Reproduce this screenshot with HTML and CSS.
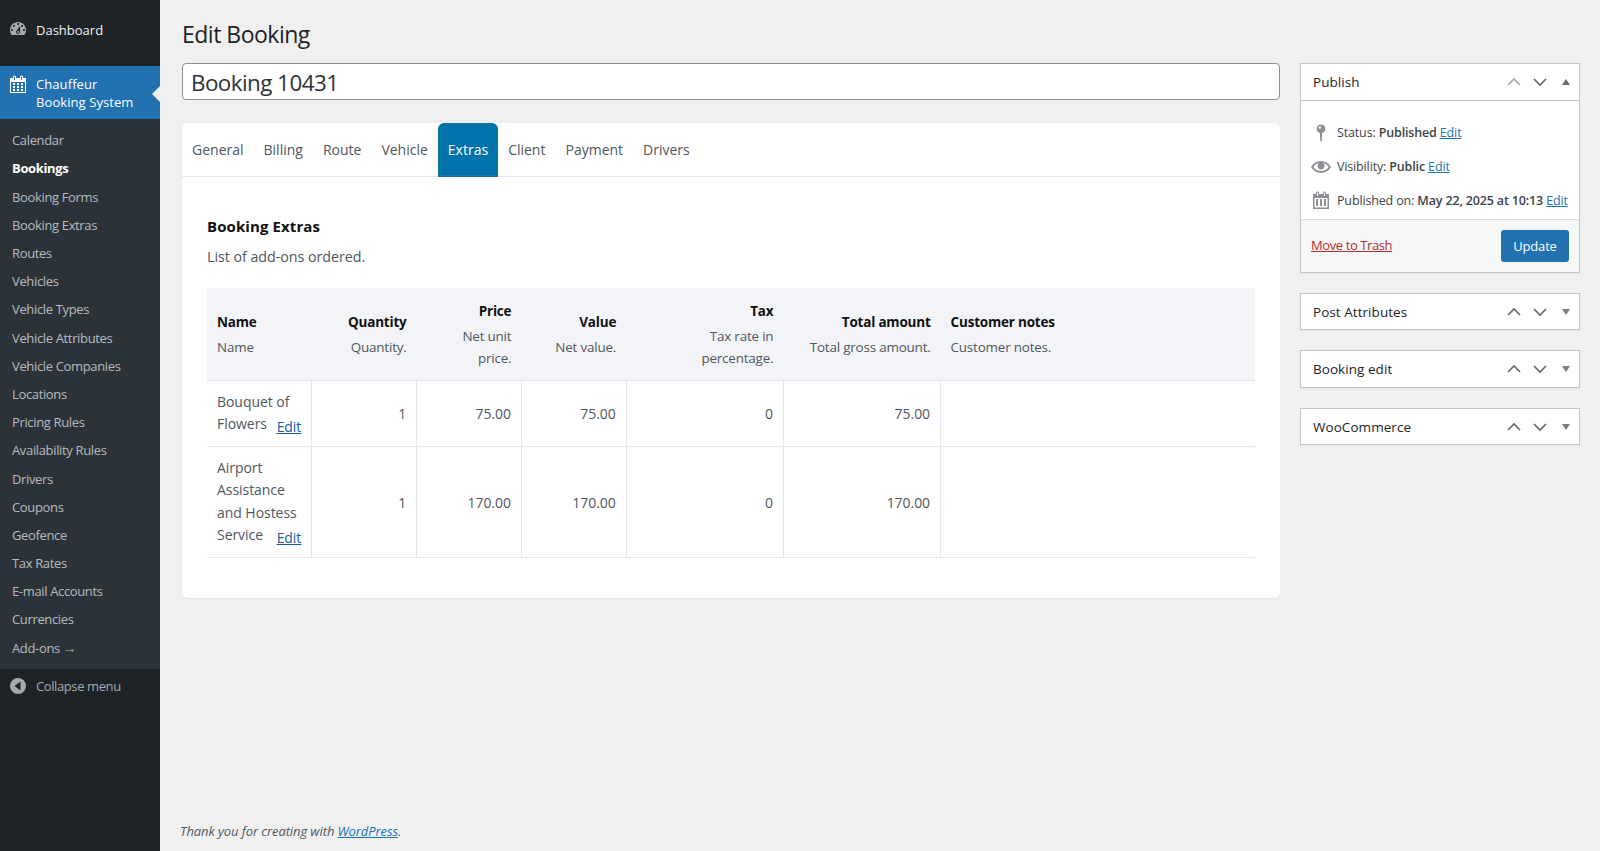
FILE: index.html
```html
<!DOCTYPE html>
<html lang="en">
<head>
<meta charset="utf-8">
<title>Edit Booking</title>
<link rel="stylesheet" href="styles.css">
</head>
<body>
<div class="layout">
  <aside class="sidebar">
    <a class="top-item dash">
      <svg class="menu-icon" viewBox="0 0 20 20"><path fill-rule="evenodd" d="M3.76 16h12.48c1.1-1.37 1.76-3.11 1.76-5 0-4.42-3.58-8-8-8s-8 3.58-8 8c0 1.89.66 3.63 1.76 5zM10 4c.55 0 1 .45 1 1s-.45 1-1 1-1-.45-1-1 .45-1 1-1zM6 6c.55 0 1 .45 1 1s-.45 1-1 1-1-.45-1-1 .45-1 1-1zm8 0c.55 0 1 .45 1 1s-.45 1-1 1-1-.45-1-1 .45-1 1-1zm-5.37 5.55L12 7v6c0 1.1-.9 2-2 2s-2-.9-2-2c0-.57.24-1.08.63-1.45zM4 10c.55 0 1 .45 1 1s-.45 1-1 1-1-.45-1-1 .45-1 1-1zm12 0c.55 0 1 .45 1 1s-.45 1-1 1-1-.45-1-1 .45-1 1-1zm-5 3c0-.55-.45-1-1-1s-1 .45-1 1 .45 1 1 1 1-.45 1-1z"/></svg>
      <span>Dashboard</span>
    </a>
    <a class="top-item current">
      <svg class="menu-icon" viewBox="0 0 20 20"><path d="M15 4h3v15H2V4h3V3c0-.41.15-.76.44-1.06.29-.29.65-.44 1.06-.44s.77.15 1.06.44c.29.3.44.65.44 1.06v1h4V3c0-.41.15-.76.44-1.06.29-.29.65-.44 1.06-.44s.77.15 1.06.44c.29.3.44.65.44 1.06v1zM6 3v2.500c0 .14.05.26.15.36.09.09.21.14.35.14s.26-.05.35-.14c.1-.1.15-.22.15-.36V3c0-.14-.05-.26-.15-.35-.09-.1-.21-.15-.35-.15s-.26.05-.35.15c-.1.09-.15.21-.15.35zm7 0v2.500c0 .14.05.26.14.36.1.09.22.14.36.14s.26-.05.36-.14c.09-.1.14-.22.14-.36V3c0-.14-.05-.26-.14-.35-.1-.1-.22-.15-.36-.15s-.26.05-.36.15c-.09.09-.14.21-.14.35zm4 15V8H3v10h14zM7 9v2H5V9h2zm2 0h2v2H9V9zm4 2V9h2v2h-2zm-6 1v2H5v-2h2zm2 0h2v2H9v-2zm4 2v-2h2v2h-2zm-6 1v2H5v-2h2zm4 2H9v-2h2v2zm4 0h-2v-2h2v2z"/></svg>
      <span>Chauffeur<br>Booking System</span>
    </a>
    <ul class="submenu">
      <li>Calendar</li>
      <li class="on">Bookings</li>
      <li>Booking Forms</li>
      <li>Booking Extras</li>
      <li>Routes</li>
      <li>Vehicles</li>
      <li>Vehicle Types</li>
      <li>Vehicle Attributes</li>
      <li>Vehicle Companies</li>
      <li>Locations</li>
      <li>Pricing Rules</li>
      <li>Availability Rules</li>
      <li>Drivers</li>
      <li>Coupons</li>
      <li>Geofence</li>
      <li>Tax Rates</li>
      <li>E-mail Accounts</li>
      <li>Currencies</li>
      <li>Add-ons →</li>
    </ul>
    <a class="collapse">
      <svg class="menu-icon" viewBox="0 0 20 20"><path fill-rule="evenodd" d="M10 2a8 8 0 1 0 0 16 8 8 0 0 0 0-16zM12.500 5.500v9L6.500 10z"/></svg>
      <span>Collapse menu</span>
    </a>
  </aside>

  <div class="page">
    <main class="content">
      <h1 class="page-title">Edit Booking</h1>
      <div class="columns">
        <div class="col-main">
          <div class="title-input">Booking 10431</div>
          <section class="card">
            <nav class="tabs">
              <a class="tab">General</a>
              <a class="tab">Billing</a>
              <a class="tab">Route</a>
              <a class="tab">Vehicle</a>
              <a class="tab active">Extras</a>
              <a class="tab">Client</a>
              <a class="tab">Payment</a>
              <a class="tab">Drivers</a>
            </nav>
            <div class="panel">
              <h2 class="panel-title">Booking Extras</h2>
              <p class="panel-sub">List of add-ons ordered.</p>
              <table class="extras">
                <colgroup>
                  <col class="w10"><col class="w10"><col class="w10"><col class="w10"><col class="w15"><col class="w15"><col class="w30">
                </colgroup>
                <thead>
                  <tr>
                    <th><b>Name</b><small>Name</small></th>
                    <th class="r"><b>Quantity</b><small>Quantity.</small></th>
                    <th class="r"><b>Price</b><small>Net unit<br>price.</small></th>
                    <th class="r"><b>Value</b><small>Net value.</small></th>
                    <th class="r"><b>Tax</b><small>Tax rate in<br>percentage.</small></th>
                    <th class="r"><b>Total amount</b><small>Total gross amount.</small></th>
                    <th><b>Customer notes</b><small>Customer notes.</small></th>
                  </tr>
                </thead>
                <tbody>
                  <tr>
                    <td>Bouquet of Flowers <a class="cell-edit">Edit</a></td>
                    <td class="r">1</td><td class="r">75.00</td><td class="r">75.00</td><td class="r">0</td><td class="r">75.00</td><td></td>
                  </tr>
                  <tr>
                    <td>Airport Assistance and Hostess Service <a class="cell-edit">Edit</a></td>
                    <td class="r">1</td><td class="r">170.00</td><td class="r">170.00</td><td class="r">0</td><td class="r">170.00</td><td></td>
                  </tr>
                </tbody>
              </table>
            </div>
          </section>
        </div>

        <aside class="col-side">
          <section class="box">
            <header class="box-head">
              <span class="box-title">Publish</span>
              <svg class="ctl dim" viewBox="0 0 16 10"><path d="M2 8l6-6 6 6"/></svg>
              <svg class="ctl" viewBox="0 0 16 10"><path d="M2 2l6 6 6-6"/></svg>
              <svg class="tri up" viewBox="0 0 10 8"><path d="M5 1l4 6H1z"/></svg>
            </header>
            <div class="pub-body">
              <div class="pub-row">
                <svg class="pub-icon" viewBox="0 0 20 20"><path fill-rule="evenodd" d="M10 1.500a4.300 4.300 0 0 0-1.100 8.450L9.300 18.500h1.400l.4-8.550A4.300 4.300 0 0 0 10 1.500zM8.900 3.400a1.200 1.200 0 1 1 0 2.400 1.200 1.200 0 0 1 0-2.400z"/></svg>
                <span>Status: <b>Published</b> <a>Edit</a></span>
              </div>
              <div class="pub-row">
                <svg class="pub-icon" viewBox="0 0 20 20"><path d="M19.700 9.400C17.700 6 14 3.900 10 3.900S2.300 6 .3 9.400L0 10l.3.6c2 3.400 5.700 5.500 9.700 5.500s7.700-2.100 9.700-5.500l.3-.6-.3-.6zM10 14.100c-3.100 0-6-1.600-7.700-4.100C3.600 8 5.700 6.600 8 6.100c-.9.6-1.500 1.700-1.500 2.900 0 1.900 1.600 3.500 3.500 3.500s3.500-1.600 3.500-3.500c0-1.200-.6-2.300-1.500-2.900 2.300.5 4.400 1.900 5.700 3.900-1.700 2.500-4.600 4.100-7.700 4.100z"/></svg>
                <span>Visibility: <b>Public</b> <a>Edit</a></span>
              </div>
              <div class="pub-row">
                <svg class="pub-icon" viewBox="0 0 20 20"><path fill-rule="evenodd" d="M15 4h3v15H2V4h3V3c0-.8.7-1.500 1.500-1.500S8 2.200 8 3v1h4V3c0-.8.7-1.500 1.500-1.500S15 2.200 15 3zM6 3v2.500a.5.5 0 0 0 1 0V3a.5.5 0 0 0-1 0zm7 0v2.500a.5.5 0 0 0 1 0V3a.5.5 0 0 0-1 0zM3.500 8v9.500h13V8zM5 9h2v7H5zm4 0h2v7H9zm4 0h2v7h-2z"/></svg>
                <span>Published on: <b>May 22, 2025 at 10:13</b> <a>Edit</a></span>
              </div>
            </div>
            <footer class="pub-foot">
              <a class="trash">Move to Trash</a>
              <button class="update" type="button">Update</button>
            </footer>
          </section>

          <section class="box closed">
            <header class="box-head">
              <span class="box-title">Post Attributes</span>
              <svg class="ctl" viewBox="0 0 16 10"><path d="M2 8l6-6 6 6"/></svg>
              <svg class="ctl" viewBox="0 0 16 10"><path d="M2 2l6 6 6-6"/></svg>
              <svg class="tri" viewBox="0 0 10 8"><path d="M5 7l4-6H1z"/></svg>
            </header>
          </section>
          <section class="box closed tall">
            <header class="box-head">
              <span class="box-title">Booking edit</span>
              <svg class="ctl" viewBox="0 0 16 10"><path d="M2 8l6-6 6 6"/></svg>
              <svg class="ctl" viewBox="0 0 16 10"><path d="M2 2l6 6 6-6"/></svg>
              <svg class="tri" viewBox="0 0 10 8"><path d="M5 7l4-6H1z"/></svg>
            </header>
          </section>
          <section class="box closed">
            <header class="box-head">
              <span class="box-title">WooCommerce</span>
              <svg class="ctl" viewBox="0 0 16 10"><path d="M2 8l6-6 6 6"/></svg>
              <svg class="ctl" viewBox="0 0 16 10"><path d="M2 2l6 6 6-6"/></svg>
              <svg class="tri" viewBox="0 0 10 8"><path d="M5 7l4-6H1z"/></svg>
            </header>
          </section>
        </aside>
      </div>
    </main>
    <footer class="page-foot"><em>Thank you for creating with <a>WordPress</a>.</em></footer>
  </div>
</div>
</body>
</html>
```

FILE: styles.css
```css
* { box-sizing: border-box; }
html, body { height: 100%; }
body {
  margin: 0;
  background: #f0f0f1;
  color: #3c434a;
  font-family: "Open Sans", "Noto Sans", sans-serif;
  font-size: 13px;
  overflow: hidden;
}
a { color: #2271b1; text-decoration: underline; }
.layout { display: flex; height: 851px; }

/* Sidebar */
.sidebar {
  width: 160px;
  flex: none;
  background: #1d2327;
  color: #f0f0f1;
}
.top-item {
  display: flex;
  color: #f0f0f1;
  text-decoration: none;
  padding-left: 8px;
  gap: 8px;
  letter-spacing: 0;
}
.menu-icon { width: 20px; height: 20px; fill: #a7aaad; flex: none; }
.dash { height: 66px; padding-top: 20px; line-height: 20px; }
.dash .menu-icon { margin-top: -1px; }
.current {
  position: relative;
  height: 53px;
  background: #2271b1;
  color: #fff;
  padding-top: 8.5px;
  line-height: 18px;
  letter-spacing: 0.08px;
}
.current .menu-icon { fill: #fff; margin-top: -1px; }
.current::after {
  content: "";
  position: absolute;
  right: 0;
  top: 20px;
  border: 8px solid transparent;
  border-left-width: 0;
  border-right-color: #f0f0f1;
}
.submenu {
  list-style: none;
  margin: 0;
  padding: 7.3px 0 6.7px;
  background: #2c3338;
  color: rgba(240, 246, 252, 0.7);
  letter-spacing: -0.35px;
}
.submenu li {
  height: 28.2px;
  line-height: 28.2px;
  padding-left: 12px;
}
.submenu .on { color: #fff; font-weight: 700; }
.collapse {
  display: flex;
  color: #a7aaad;
  text-decoration: none;
  padding: 7px 0 0 8px;
  gap: 8px;
  line-height: 20px;
  letter-spacing: -0.4px;
}

/* Page */
.page { flex: 1; display: flex; flex-direction: column; min-width: 0; }
.content { flex: 1; padding: 0 20px 0 22px; }
.page-title {
  margin: 0;
  height: 63px;
  padding-top: 18px;
  font-size: 23px;
  line-height: 32px;
  font-weight: 400;
  color: #1d2327;
  letter-spacing: -0.5px;
}
.columns { display: grid; grid-template-columns: minmax(0, 1fr) 280px; gap: 20px; align-items: start; }
.title-input {
  height: 37px;
  border: 1px solid #8c8f94;
  border-radius: 4px;
  background: #fff;
  padding: 1px 0 0 8px;
  font-size: 22.4px;
  line-height: 35px;
  color: #2c3338;
  letter-spacing: -0.55px;
}
.card {
  margin-top: 23px;
  background: #fff;
  border-radius: 6px;
  box-shadow: 0 1px 2px rgba(0, 0, 0, 0.05);
  height: 475px;
}
.tabs {
  display: flex;
  height: 54px;
  border-bottom: 1px solid #e5e7eb;
  font-size: 14px;
  letter-spacing: 0;
}
.tab {
  display: block;
  padding: 0 10px;
  line-height: 53px;
  height: 54px;
  color: #50575e;
  text-decoration: none;
}
.active {
  background: #0073aa;
  color: #fff;
  border-radius: 6px 6px 0 0;
  border-bottom: 2px solid #2271b1;
}
.panel { padding: 39px 25px 0; }
.panel-title {
  margin: 0;
  font-size: 15px;
  line-height: 20px;
  font-weight: 700;
  color: #111;
  letter-spacing: 0.1px;
}
.panel-sub {
  margin: 10.5px 0 0;
  font-size: 14.3px;
  line-height: 20px;
  color: #50575e;
  letter-spacing: -0.05px;
}

/* Table */
.extras {
  margin-top: 21.5px;
  width: 100%;
  table-layout: fixed;
  border-collapse: collapse;
  font-size: 14px;
  letter-spacing: -0.05px;
  color: #50575e;
}
.w10 { width: 10%; }
.w15 { width: 15%; }
.w30 { width: 30%; }
.extras th {
  background: #f3f4f8;
  padding: 10px;
  height: 92px;
  font-weight: 400;
  text-align: left;
  vertical-align: middle;
  border-bottom: 1px solid #e5e7eb;
}
.extras th b {
  display: block;
  color: #111;
  font-weight: 700;
  font-size: 13.5px;
  line-height: 25px;
  letter-spacing: -0.2px;
}
.extras th small {
  display: block;
  margin-top: 1px;
  font-size: 13.45px;
  line-height: 22px;
  letter-spacing: -0.2px;
}
.extras th.r { text-align: right; }
.extras td {
  padding: 10px;
  line-height: 22.5px;
  vertical-align: middle;
  border-left: 1px solid #e5e7eb;
  border-bottom: 1px solid #e5e7eb;
}
.extras td:first-child { border-left: 0; }
.extras td.r { text-align: right; padding: 12px 10px 9px; }
.cell-edit { color: #135e96; float: right; margin-top: 3.5px; line-height: 19px; }

/* Side boxes */
.col-side { display: flex; flex-direction: column; gap: 20px; }
.box {
  background: #fff;
  border: 1px solid #c3c4c7;
  box-shadow: 0 1px 1px rgba(0, 0, 0, 0.04);
}
.box-head {
  display: flex;
  align-items: center;
  height: 36px;
  padding: 0 8px 0 12px;
  color: #1d2327;
}
.box .box-head { border-bottom: 1px solid #c3c4c7; height: 37px; }
.box.closed .box-head { border-bottom: 0; height: 35px; }
.box.tall .box-head { height: 36px; }
.box-title { flex: 1; font-size: 13.5px; letter-spacing: 0.05px; }
.ctl {
  width: 16px;
  height: 10px;
  margin-right: 10px;
  fill: none;
  stroke: #646970;
  stroke-width: 1.7;
}
.dim { stroke: #a7aaad; }
.tri { width: 10px; height: 8px; margin-left: 3px; fill: #787c82; }
.tri.up { fill: #646970; }
.pub-body { padding: 15px 10px 0; height: 118px; }
.pub-row {
  display: flex;
  align-items: center;
  height: 33.7px;
  font-size: 12.5px;
  letter-spacing: -0.15px;
  white-space: nowrap;
}
.pub-row b { font-weight: 600; }
.pub-icon { width: 20px; height: 20px; margin-right: 6px; fill: #8c8f94; flex: none; }
.pub-foot {
  display: flex;
  align-items: center;
  justify-content: space-between;
  height: 53px;
  padding: 0 10px;
  background: #f6f7f7;
  border-top: 1px solid #dcdcde;
}
.trash { color: #b32d2e; font-size: 13px; letter-spacing: -0.4px; margin-bottom: 2px; }
.update {
  width: 68px;
  height: 32px;
  border: 0;
  border-radius: 3px;
  background: #2271b1;
  color: #fff;
  font: 13px "Open Sans", "Noto Sans", sans-serif;
  letter-spacing: -0.2px;
}

/* Footer */
.page-foot {
  padding: 0 0 10px 20px;
  font-size: 13px;
  line-height: 20px;
  color: #50575e;
  letter-spacing: -0.1px;
}
```
